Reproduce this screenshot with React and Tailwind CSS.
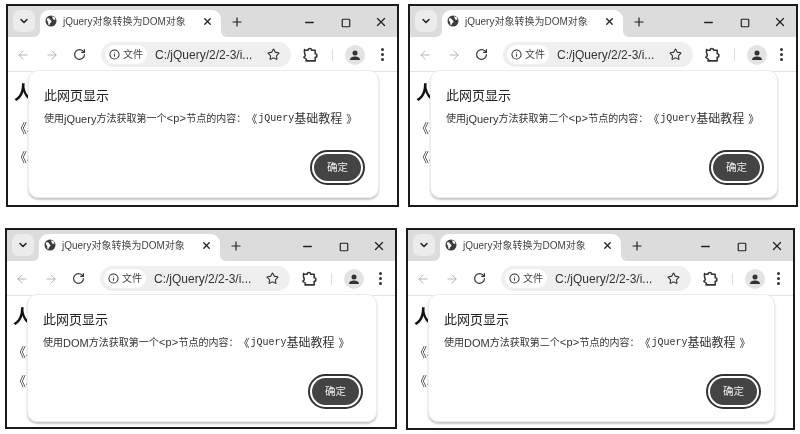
import { ChevronDown, X, Plus, Minus, Square, ArrowLeft, ArrowRight, RotateCw, Info, Star } from 'lucide-react';

const frames = [
  { id: 1, method: 'jQuery', order: '第一个', size: 'w-[393px] h-[203px]' },
  { id: 2, method: 'jQuery', order: '第二个', size: 'w-[390px] h-[203px]' },
  { id: 3, method: 'DOM', order: '第一个', size: 'w-[392px] h-[201px] -ml-px' },
  { id: 4, method: 'DOM', order: '第二个', size: 'w-[389px] h-[202px] -ml-[2px]' },
];

function GlobeIcon() {
  return (
    <svg width="12" height="12" viewBox="0 0 24 24" className="shrink-0">
      <circle cx="12" cy="12" r="11" fill="#3c3c3c" />
      <path d="M4 7c3-1 5 0 6 2s3 2 3 4-2 2-3 4-1 3-2 4c-2-2-1-5-2-7S3 11 4 7zM15 2c1 2 3 2 4 2l2 5c-2 1-4 1-5-1s-2-4-1-6z" fill="#fff" />
    </svg>
  );
}

function PuzzleIcon() {
  return (
    <svg width="17" height="17" viewBox="0 0 24 24" fill="none" stroke="#333" strokeWidth="2.2" strokeLinejoin="round" className="shrink-0">
      <path d="M5 6h5a2.5 2.5 0 0 1 5 0h5v5a2.5 2.5 0 0 1 0 5v5H7c1-1 1-2 0-3s-3-1-3-2 2-1 2-3-2-2-1-8z" />
    </svg>
  );
}

function ProfileIcon() {
  return (
    <div className="w-[20px] h-[20px] rounded-full bg-[#e3e3e3] flex items-center justify-center shrink-0">
      <svg width="12" height="12" viewBox="0 0 24 24" fill="#333">
        <circle cx="12" cy="8" r="5" />
        <path d="M2 22c0-5 5-7 10-7s10 2 10 7z" />
      </svg>
    </div>
  );
}

function BrowserFrame({ method, order, size }) {
  return (
    <div className={`relative overflow-hidden bg-white border-2 border-[#1a1a1a] ${size}`}>
      {/* tab strip */}
      <div className="h-[31px] bg-[#dcdcdc] flex items-end pl-[5px] text-[#222]">
        <div className="w-[22px] h-[22px] mb-[5px] rounded-[7px] bg-[#ececec] flex items-center justify-center shrink-0">
          <ChevronDown size={12} strokeWidth={3} />
        </div>
        <div className="relative w-[181px] h-[27px] ml-[5px] bg-white rounded-t-[9px] flex items-center pl-[5px] pr-[8px] pb-[5px] shrink-0">
          <div className="absolute -left-[6px] bottom-0 w-[6px] h-[6px] bg-white">
            <div className="w-full h-full bg-[#dcdcdc] rounded-br-[6px]" />
          </div>
          <div className="absolute -right-[6px] bottom-0 w-[6px] h-[6px] bg-white">
            <div className="w-full h-full bg-[#dcdcdc] rounded-bl-[6px]" />
          </div>
          <GlobeIcon />
          <span className="ml-[6px] text-[10px] whitespace-nowrap text-[#444]">jQuery对象转换为DOM对象</span>
          <X size={11} strokeWidth={2.8} className="ml-auto" />
        </div>
        <Plus size={14} strokeWidth={2} className="ml-[9px] mb-[8px] shrink-0" />
        <Minus size={13} strokeWidth={2.4} className="ml-auto mr-[25px] mb-[8px]" />
        <Square size={10} strokeWidth={2.8} className="mr-[23px] mb-[9px]" />
        <X size={14} strokeWidth={2.2} className="mr-[9px] mb-[8px]" />
      </div>
      {/* toolbar */}
      <div className="h-[35px] pt-px border-b border-[#e2e2e2] flex items-center pl-[8px] pr-[8px] text-[#333]">
        <ArrowLeft size={14} strokeWidth={1.6} className="text-[#b0b0b0] shrink-0" />
        <ArrowRight size={14} strokeWidth={1.6} className="ml-[15px] text-[#b0b0b0] shrink-0" />
        <RotateCw size={13} strokeWidth={2.2} className="ml-[14px] shrink-0" />
        <div className="ml-[15px] w-[190px] h-[25px] rounded-full bg-[#efefef] flex items-center pl-[4px] pr-[11px] shrink-0">
          <div className="h-[19px] w-[42px] rounded-full bg-white flex items-center pl-[4px] gap-[3px] shrink-0">
            <Info size={11} strokeWidth={2.2} />
            <span className="text-[10px] text-[#444]">文件</span>
          </div>
          <span className="ml-[8px] text-[12px] whitespace-nowrap">C:/jQuery/2/2-3/i...</span>
          <Star size={13} strokeWidth={2} className="ml-auto shrink-0" />
        </div>
        <div className="ml-[10px]"><PuzzleIcon /></div>
        <div className="ml-[14px] w-px h-[12px] bg-[#ddd] shrink-0" />
        <div className="ml-[12px]"><ProfileIcon /></div>
        <div className="ml-auto mr-[5px] flex flex-col gap-[2px] shrink-0">
          <div className="w-[3px] h-[3px] rounded-full bg-[#333]" />
          <div className="w-[3px] h-[3px] rounded-full bg-[#333]" />
          <div className="w-[3px] h-[3px] rounded-full bg-[#333]" />
        </div>
      </div>
      {/* page behind the dialog */}
      <div className="pl-[6px] pt-[8px] text-[#111]">
        <div className="text-[19px] leading-[28px] font-bold">人</div>
        <div className="mt-[13px] text-[13px] leading-[16px] text-[#444]">《J</div>
        <div className="mt-[13px] text-[13px] leading-[16px] text-[#444]">《J</div>
      </div>
      {/* alert dialog */}
      <div className="absolute left-[20px] right-[18px] top-[64px] h-[128px] bg-white rounded-[10px] border border-[#ececec] shadow-[0_2px_2px_rgba(0,0,0,0.22)] pl-[15px] pr-[13px] pt-[15px] flex flex-col">
        <div className="text-[13px] leading-[20px] text-[#222]">此网页显示</div>
        <div className="mt-[5px] text-[10px] leading-[16px] text-[#333] whitespace-nowrap flex items-center">
          <span>使用</span>
          <span className="text-[11px]">{method}</span>
          <span>方法获取{order}</span>
          <span className="font-['Liberation_Mono',monospace] text-[11px]">&lt;p&gt;</span>
          <span>节点的内容：</span>
          <span className="text-[11px]">《</span>
          <span className="ml-[1px] font-['Liberation_Mono',monospace] text-[10px]">jQuery</span>
          <span className="text-[12px]">基础教程</span>
          <span className="ml-[4px] text-[11px]">》</span>
        </div>
        <div className="mt-auto mb-[12px] self-end w-[55px] h-[35px] rounded-full border-2 border-[#333] p-[2px]">
          <div className="w-full h-full rounded-full bg-[#444] text-[#eee] text-[10.5px] flex items-center justify-center">确定</div>
        </div>
      </div>
    </div>
  );
}

export default function App() {
  return (
    <div className="w-[800px] h-[434px] bg-white overflow-hidden font-['Liberation_Sans','Noto_Sans_CJK_SC',sans-serif] blur-[0.4px]">
      <div className="grid grid-cols-[402px_390px] pl-[6px] pt-[4px] gap-y-[21px]">
        {frames.map((f) => (
          <BrowserFrame key={f.id} method={f.method} order={f.order} size={f.size} />
        ))}
      </div>
    </div>
  );
}
